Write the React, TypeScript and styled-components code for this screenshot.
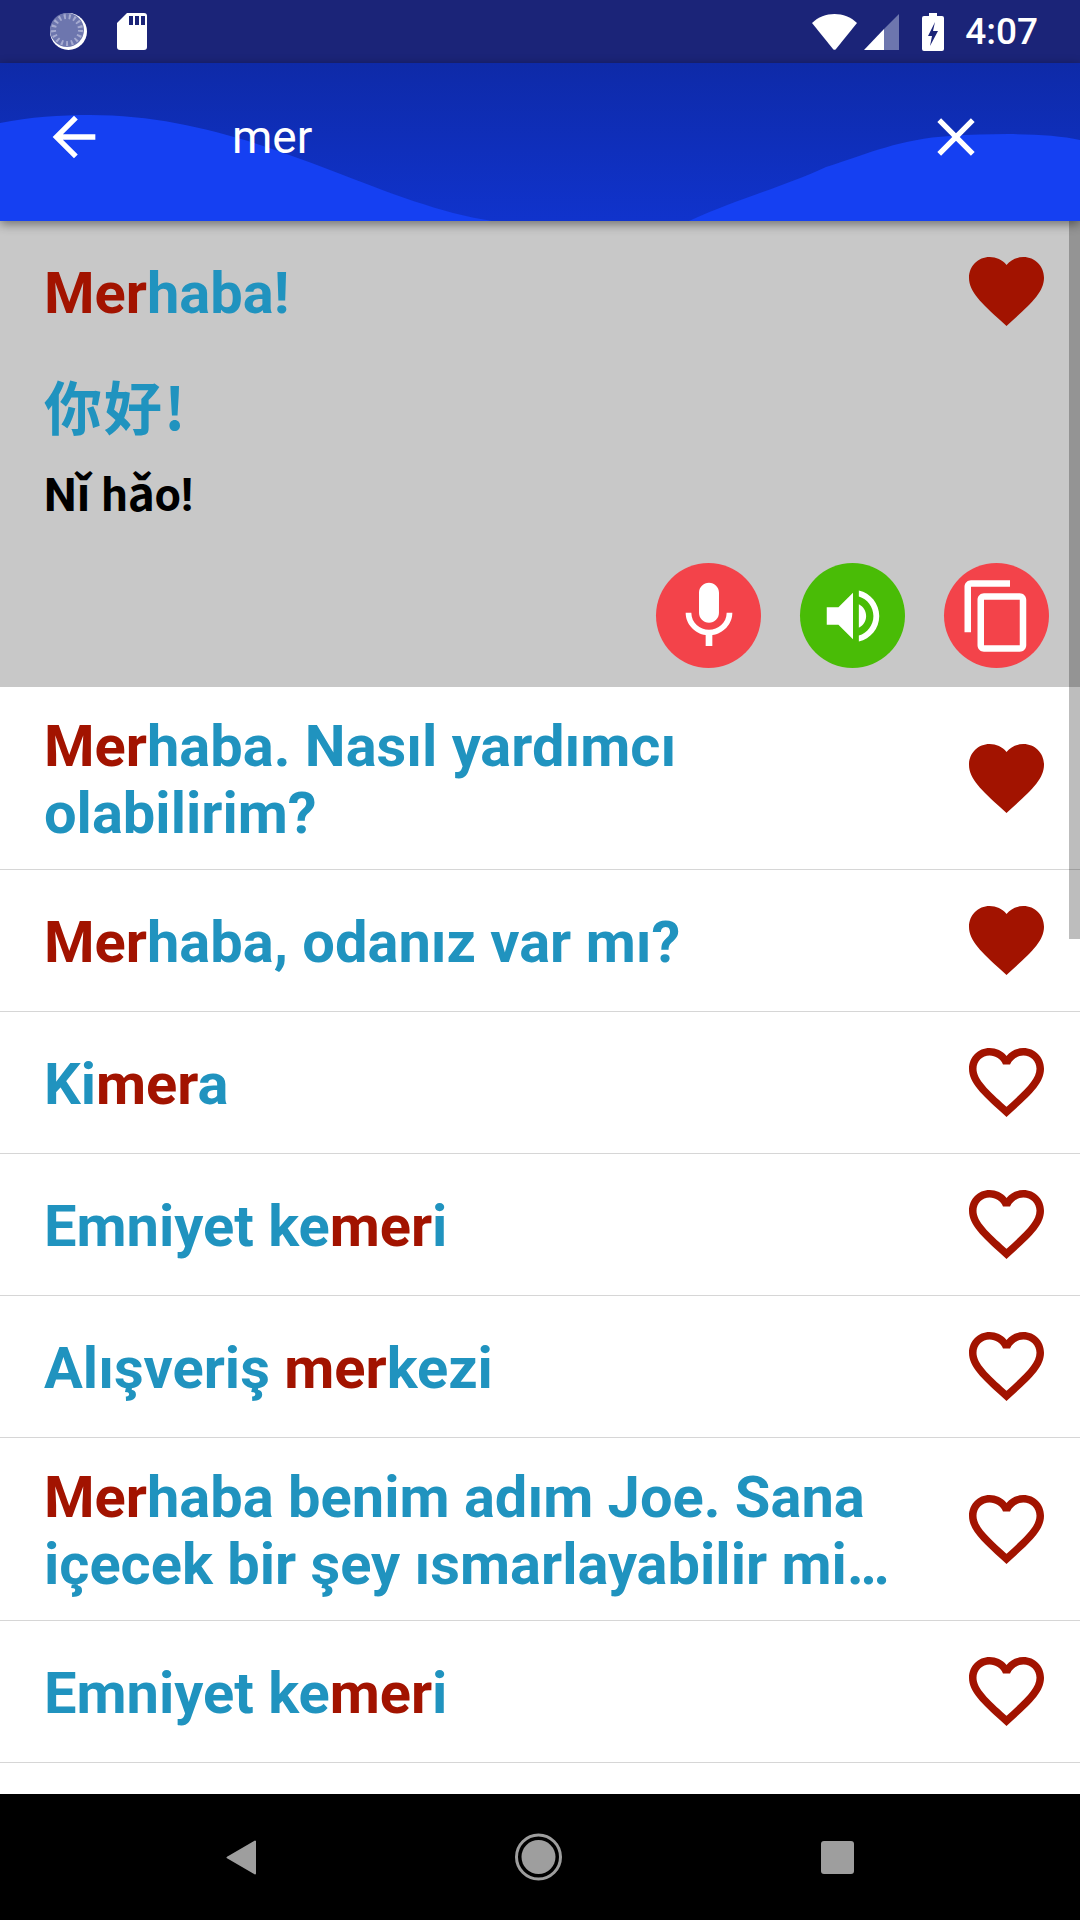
import React from "react";
import styled, { createGlobalStyle } from "styled-components";

const Global = createGlobalStyle`
  html, body { margin: 0; padding: 0; background: #fff; }
  #root { width: 1080px; height: 1920px; }
`;

const Screen = styled.div`
  width: 1080px;
  height: 1920px;
  display: flex;
  flex-direction: column;
  overflow: hidden;
  font-family: Roboto, "Noto Sans CJK SC", sans-serif;
  background: #fff;
`;

const StatusBar = styled.div`
  height: 63px;
  flex: none;
  background: #1b2478;
  display: flex;
  align-items: center;
  padding: 0 42px 0 50px;
  color: #fff;
`;

const StatusLeft = styled.div`
  display: flex;
  align-items: center;
  gap: 30px;
  flex: 1;
`;

const StatusRight = styled.div`
  display: flex;
  align-items: center;
`;

const Clock = styled.span`
  font-size: 37px;
  font-weight: 500;
  margin-left: 21px;
  line-height: 1;
`;

const AppBar = styled.header`
  position: relative;
  z-index: 2;
  height: 158px;
  box-sizing: border-box;
  flex: none;
  display: flex;
  align-items: center;
  padding: 0 92px 11px 42px;
  box-shadow: 0 3px 10px rgba(0, 0, 0, 0.45);
  background: #0e2bb2;
  overflow: hidden;
`;

const Wave = styled.svg`
  position: absolute;
  inset: 0;
`;

const BarIcon = styled.svg`
  position: relative;
  flex: none;
  width: 64px;
  height: 64px;
`;

const Query = styled.div`
  position: relative;
  flex: 1;
  margin-left: 126px;
  color: #fff;
  font-size: 46px;
  line-height: 1;
`;

const Body = styled.main`
  position: relative;
  flex: 1;
  min-height: 0;
  overflow: hidden;
`;

const Track = styled.div`
  position: absolute;
  top: 0;
  right: 0;
  width: 11px;
  height: 718px;
  background: rgba(0, 0, 0, 0.26);
`;

const Selected = styled.section`
  height: 466px;
  box-sizing: border-box;
  background: #c8c8c8;
  padding: 36px 36px 19px 44px;
  display: flex;
  flex-direction: column;
`;

const SelectedTop = styled.div`
  display: flex;
  justify-content: space-between;
  align-items: flex-start;
`;

const Phrase = styled.div`
  font-size: 57.8px;
  font-weight: 700;
  line-height: 67px;
  color: #2093bf;
  flex: 1;
  max-width: 860px;
  padding-top: 3px;
`;

const Hit = styled.span`
  color: #a21300;
`;

const Hanzi = styled.div`
  margin-top: 38px;
  font-family: "Noto Sans CJK SC", sans-serif;
  font-size: 58px;
  font-weight: 700;
  line-height: 80px;
  letter-spacing: 2px;
  color: #2093bf;
`;

const Pinyin = styled.div`
  margin-top: 24px;
  font-size: 46px;
  font-weight: 700;
  line-height: 52px;
  color: #000;
`;

const Actions = styled.div`
  margin-top: auto;
  display: flex;
  justify-content: flex-end;
  gap: 39px;
  margin-right: -5px;
`;

const Round = styled.div<{ $bg: string }>`
  width: 105px;
  height: 105px;
  border-radius: 50%;
  background: ${(p) => p.$bg};
  display: flex;
  align-items: center;
  justify-content: center;
`;

const ActionIcon = styled.svg<{ $size: number }>`
  width: ${(p) => p.$size}px;
  height: ${(p) => p.$size}px;
  fill: #fff;
`;

const Row = styled.article<{ $tall?: boolean }>`
  box-sizing: border-box;
  height: ${(p) => (p.$tall ? 183 : 142)}px;
  border-bottom: 1px solid #d6d6d6;
  padding: 0 36px 0 44px;
  display: flex;
  align-items: center;
  justify-content: space-between;
`;

const Heart = styled.svg`
  width: 75px;
  height: 69px;
  flex: none;
  fill: #a21300;
`;

const NavBar = styled.nav`
  height: 126px;
  flex: none;
  background: #000;
  display: flex;
  align-items: center;
  justify-content: space-between;
  padding: 0 226px;
`;

const NavIcon = styled.svg`
  flex: none;
  fill: #9e9e9e;
`;

const HeartIcon = ({ filled }: { filled: boolean }) => (
  <Heart viewBox="2 3 20 18.35">
    <path
      d={
        filled
          ? "M12 21.35l-1.45-1.32C5.4 15.36 2 12.28 2 8.5 2 5.42 4.42 3 7.5 3c1.74 0 3.41.81 4.5 2.09C13.09 3.81 14.76 3 16.5 3 19.58 3 22 5.42 22 8.5c0 3.78-3.4 6.86-8.55 11.54L12 21.35z"
          : "M16.5 3c-1.74 0-3.41.81-4.5 2.09C10.91 3.81 9.24 3 7.5 3 4.42 3 2 5.42 2 8.5c0 3.78 3.4 6.86 8.55 11.54L12 21.35l1.45-1.32C18.6 15.36 22 12.28 22 8.5 22 5.42 19.58 3 16.5 3zm-4.4 15.55l-.1.1-.1-.1C7.14 14.24 4 11.39 4 8.5 4 6.5 5.5 5 7.5 5c1.54 0 3.04.99 3.57 2.36h1.87C13.46 5.99 14.96 5 16.5 5c2 0 3.5 1.5 3.5 3.5 0 2.89-3.14 5.74-7.9 10.05z"
      }
    />
  </Heart>
);

type Part = [string, boolean?];

const Text = ({ parts }: { parts: Part[] }) => (
  <Phrase>
    {parts.map(([t, h], i) => (h ? <Hit key={i}>{t}</Hit> : <span key={i}>{t}</span>))}
  </Phrase>
);

const rows: { parts: Part[]; filled: boolean; tall?: boolean }[] = [
  { parts: [["Mer", true], ["haba. Nasıl yardımcı olabilirim?"]], filled: true, tall: true },
  { parts: [["Mer", true], ["haba, odanız var mı?"]], filled: true },
  { parts: [["Ki"], ["mer", true], ["a"]], filled: false },
  { parts: [["Emniyet ke"], ["mer", true], ["i"]], filled: false },
  { parts: [["Alışveriş "], ["mer", true], ["kezi"]], filled: false },
  { parts: [["Mer", true], ["haba benim adım Joe. Sana içecek bir şey ısmarlayabilir mi…"]], filled: false, tall: true },
  { parts: [["Emniyet ke"], ["mer", true], ["i"]], filled: false },
];

export default function App() {
  return (
    <Screen>
      <Global />
      <StatusBar>
        <StatusLeft>
          <svg width="37" height="37" viewBox="0 0 37 37">
            <circle cx="18.500" cy="18.500" r="18.500" fill="#fff" />
            <circle cx="17" cy="17" r="17" fill="#6d76ae" />
            <circle cx="17" cy="17" r="13.500" fill="none" stroke="#a6abd0" strokeWidth="5" strokeDasharray="2 3" />
          </svg>
          <svg width="30" height="37" viewBox="0 0 30 37">
            <path d="M10 0H27a3 3 0 0 1 3 3V34a3 3 0 0 1-3 3H3a3 3 0 0 1-3-3V10Z" fill="#fff" />
            <path d="M12 3h4v9h-4zM18 3h4v9h-4zM24 3h4v9h-4z" fill="#1b2478" />
          </svg>
        </StatusLeft>
        <StatusRight>
          <svg width="45" height="36" viewBox="0 0 45 36">
            <path d="M0 9C12 -3 33 -3 45 9L24 35a2 2 0 0 1-3 0Z" fill="#fff" />
          </svg>
          <svg width="35" height="36" viewBox="0 0 35 36" style={{ marginLeft: 7 }}>
            <path d="M35 0V36H20V15Z" fill="#6d76ae" />
            <path d="M0 36 20 15V36Z" fill="#fff" />
          </svg>
          <svg width="22" height="38" viewBox="0 0 22 38" style={{ marginLeft: 23 }}>
            <path d="M7 0h8v3h5a2 2 0 0 1 2 2V36a2 2 0 0 1-2 2H2a2 2 0 0 1-2-2V5a2 2 0 0 1 2-2h5Z" fill="#fff" />
            <path d="M13 9 6 23h4l-2 10 8-15h-5Z" fill="#1b2478" />
          </svg>
          <Clock>4:07</Clock>
        </StatusRight>
      </StatusBar>
      <AppBar>
        <Wave width="1080" height="158" viewBox="0 0 1080 158">
          <defs>
            <linearGradient id="back" x1="0" y1="0" x2="0" y2="1">
              <stop offset="0" stopColor="#0e2aa8" />
              <stop offset="1" stopColor="#1033cc" />
            </linearGradient>
          </defs>
          <rect width="1080" height="158" fill="url(#back)" />
          <path
            d="M0 60C30 54 60 52 90 52C180 52 260 80 330 107C390 130 440 150 492 158H689C740 135 780 125 826 104C870 90 900 76 950 73C1000 70 1050 70 1080 77V158H0Z"
            fill="#1540f2"
          />
        </Wave>
        <BarIcon viewBox="0 0 24 24" fill="#fff">
          <path d="M20 11H7.830l5.590-5.590L12 4l-8 8 8 8 1.410-1.410L7.830 13H20v-2z" />
        </BarIcon>
        <Query>mer</Query>
        <BarIcon viewBox="0 0 24 24" fill="#fff">
          <path d="M19 6.410L17.590 5 12 10.590 6.410 5 5 6.410 10.590 12 5 17.590 6.410 19 12 13.410 17.590 19 19 17.590 13.410 12z" />
        </BarIcon>
      </AppBar>
      <Body>
        <Selected>
          <SelectedTop>
            <Text parts={[["Mer", true], ["haba!"]]} />
            <HeartIcon filled />
          </SelectedTop>
          <Hanzi>你好!</Hanzi>
          <Pinyin>Nǐ hǎo!</Pinyin>
          <Actions>
            <Round $bg="#f3434a">
              <ActionIcon $size={80} viewBox="0 0 24 24">
                <path d="M12 14c1.660 0 2.990-1.340 2.990-3L15 5c0-1.660-1.340-3-3-3S9 3.340 9 5v6c0 1.660 1.340 3 3 3zm5.300-3c0 3-2.540 5.100-5.300 5.100S6.700 14 6.700 11H5c0 3.410 2.720 6.230 6 6.720V21h2v-3.280c3.280-.480 6-3.300 6-6.720h-1.700z" />
              </ActionIcon>
            </Round>
            <Round $bg="#49bc06">
              <ActionIcon $size={70} viewBox="0 0 24 24">
                <path d="M3 9v6h4l5 5V4L7 9H3zm13.500 3c0-1.770-1.020-3.290-2.500-4.030v8.050c1.480-.730 2.500-2.250 2.500-4.020zM14 3.230v2.060c2.890.860 5 3.540 5 6.710s-2.110 5.850-5 6.710v2.060c4.010-.910 7-4.490 7-8.770s-2.990-7.860-7-8.770z" />
              </ActionIcon>
            </Round>
            <Round $bg="#f3434a">
              <ActionIcon $size={78} viewBox="0 0 24 24">
                <path d="M16 1H4c-1.100 0-2 .9-2 2v14h2V3h12V1zm3 4H8c-1.100 0-2 .9-2 2v14c0 1.100.9 2 2 2h11c1.100 0 2-.9 2-2V7c0-1.100-.9-2-2-2zm0 16H8V7h11v14z" />
              </ActionIcon>
            </Round>
          </Actions>
        </Selected>
        {rows.map((r, i) => (
          <Row key={i} $tall={r.tall}>
            <Text parts={r.parts} />
            <HeartIcon filled={r.filled} />
          </Row>
        ))}
        <Track />
      </Body>
      <NavBar>
        <NavIcon width="30" height="35" viewBox="0 0 30 35">
          <path d="M29 1.500V33.500L1.500 17.500Z" stroke="#9e9e9e" strokeWidth="2" strokeLinejoin="round" />
        </NavIcon>
        <NavIcon width="47" height="48" viewBox="0 0 47 48">
          <circle cx="23.500" cy="24" r="22" fill="none" stroke="#9e9e9e" strokeWidth="3" />
          <circle cx="23.500" cy="24" r="17" />
        </NavIcon>
        <NavIcon width="33" height="33" viewBox="0 0 33 33">
          <rect width="33" height="33" rx="3" />
        </NavIcon>
      </NavBar>
    </Screen>
  );
}
